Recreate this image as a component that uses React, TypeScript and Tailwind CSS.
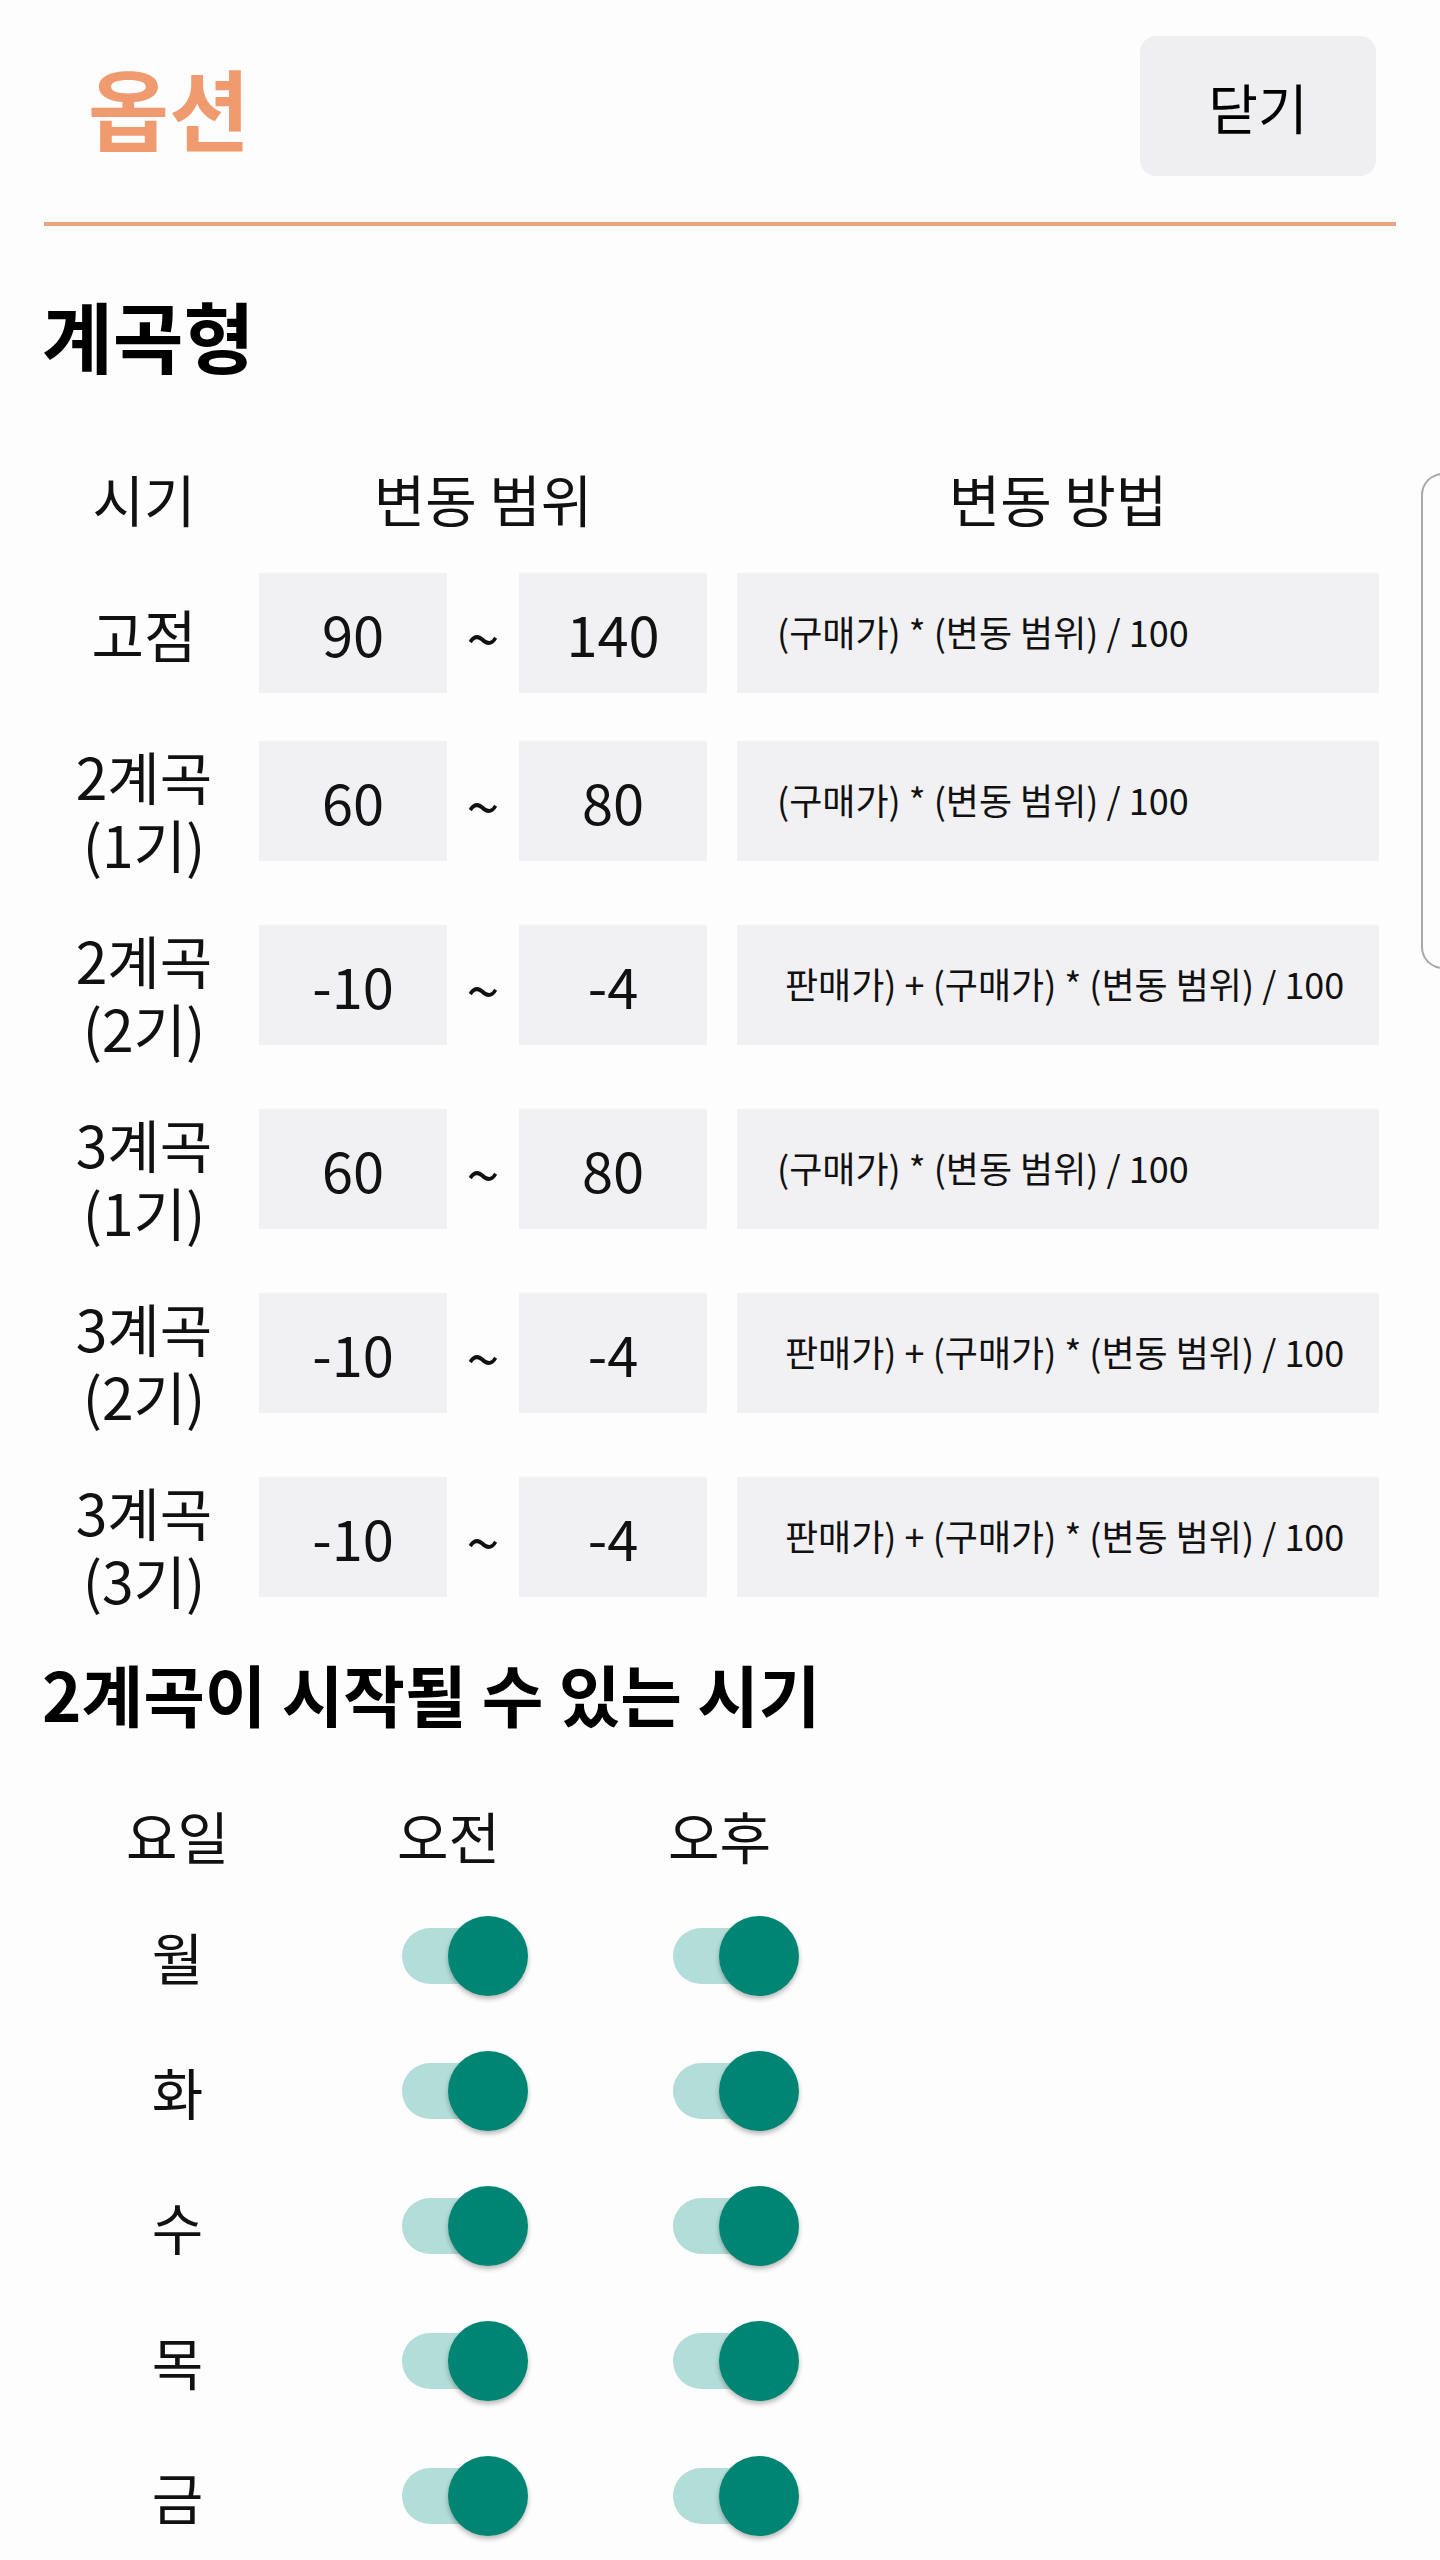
import React from "react";

type Row = { label: string; min: string; max: string; formula: string };

const rows: Row[] = [
    { label: "고점", min: "90", max: "140", formula: "(구매가) * (변동 범위) / 100" },
    { label: "2계곡\n(1기)", min: "60", max: "80", formula: "(구매가) * (변동 범위) / 100" },
    { label: "2계곡\n(2기)", min: "-10", max: "-4", formula: "판매가) + (구매가) * (변동 범위) / 100" },
    { label: "3계곡\n(1기)", min: "60", max: "80", formula: "(구매가) * (변동 범위) / 100" },
    { label: "3계곡\n(2기)", min: "-10", max: "-4", formula: "판매가) + (구매가) * (변동 범위) / 100" },
    { label: "3계곡\n(3기)", min: "-10", max: "-4", formula: "판매가) + (구매가) * (변동 범위) / 100" },
];

const days = ["월", "화", "수", "목", "금"];

const Toggle = () => (
    <div className="relative ml-[89px] h-[80px] w-[126px]">
        <div className="absolute left-0 top-[12px] h-[56px] w-[114px] rounded-full bg-[#b2ddd8]" />
        <div className="absolute left-[46px] top-0 h-[80px] w-[80px] rounded-full bg-[#008574] shadow-[0_3px_5px_rgba(0,0,0,0.28)]" />
    </div>
);

export default function App() {
    return (
        <div className="relative min-h-[2560px] w-[1440px] overflow-hidden bg-[#fdfdfd] font-['Noto_Sans_CJK_KR',sans-serif] text-[#111]">
            {/* header */}
            <div className="flex items-center justify-between pl-[88px] pr-[64px] pt-[36px]">
                <h1 className="text-[88px] font-bold leading-none text-[#ef9b6f]">옵션</h1>
                <button className="h-[140px] w-[236px] rounded-[16px] bg-[#efeef1] text-[54px] text-black">닫기</button>
            </div>
            <div className="mx-[44px] mt-[46px] h-[4px] bg-[#efa17a]" />

            <h2 className="mt-[66px] px-[42px] text-[77px] font-bold leading-[86px] text-black">계곡형</h2>

            {/* table */}
            <div className="mt-[86px] flex pl-[44px] text-[56px] leading-[68px]">
                <div className="w-[200px] text-center">시기</div>
                <div className="ml-[15px] w-[448px] text-center">변동 범위</div>
                <div className="ml-[30px] w-[642px] text-center">변동 방법</div>
            </div>
            <div className="mt-[41px] flex flex-col gap-[48px]">
                {rows.map((r, i) => (
                    <div key={i} className="flex items-start pl-[44px]">
                        <div className="flex min-h-[120px] w-[200px] items-center justify-center whitespace-pre-line text-center text-[57px] leading-[68px]">
                            {r.label}
                        </div>
                        <div className="ml-[15px] flex h-[120px] w-[188px] items-center justify-center bg-[#f1f0f3] text-[56px]">
                            {r.min}
                        </div>
                        <div className="flex h-[120px] w-[72px] items-center justify-center pt-[6px] text-[60px]">~</div>
                        <div className="flex h-[120px] w-[188px] items-center justify-center bg-[#f1f0f3] text-[56px]">
                            {r.max}
                        </div>
                        <div
                            className={`ml-[30px] flex h-[120px] w-[642px] items-center bg-[#f1f0f3] pb-[5px] text-[36px] ${
                                r.formula.startsWith("판") ? "pl-[48px]" : "pl-[40px]"
                            }`}
                        >
                            {r.formula}
                        </div>
                    </div>
                ))}
            </div>

            <h2 className="mt-[44px] px-[42px] text-[67px] font-bold leading-[72px] text-black">2계곡이 시작될 수 있는 시기</h2>

            <div className="mt-[74px] flex pl-[42px] text-[56px] leading-[64px]">
                <div className="w-[271px] text-center">요일</div>
                <div className="w-[271px] text-center">오전</div>
                <div className="w-[271px] text-center">오후</div>
            </div>
            <div className="mt-[21px] flex flex-col">
                {days.map((d) => (
                    <div key={d} className="flex h-[135px] items-center pl-[42px]">
                        <div className="w-[271px] text-center text-[56px]">{d}</div>
                        <div className="w-[271px]">
                            <Toggle />
                        </div>
                        <div className="w-[271px]">
                            <Toggle />
                        </div>
                    </div>
                ))}
            </div>

            {/* edge panel handle */}
            <div className="absolute left-[1421px] top-[473px] h-[496px] w-[40px] rounded-l-[22px] border-2 border-r-0 border-[#a9a9a9] bg-[#fdfdfd]" />
        </div>
    );
}
